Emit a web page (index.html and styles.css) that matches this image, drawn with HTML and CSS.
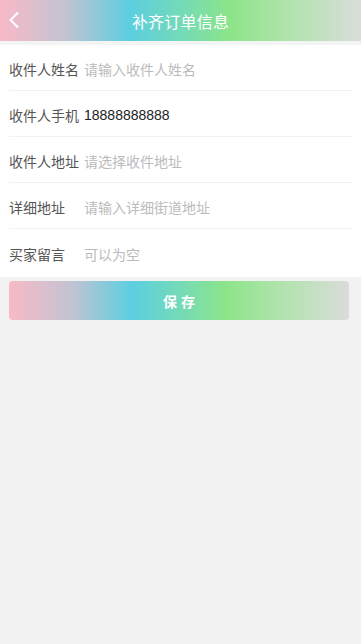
FILE: index.html
```html
<!DOCTYPE html>
<html lang="zh">
<head>
<meta charset="utf-8">
<title>补齐订单信息</title>
<link rel="stylesheet" href="styles.css">
</head>
<body>
<header class="topbar">
  <span class="back">
    <svg width="12" height="18" viewBox="0 0 12 18"><path d="M10 1.5 L2.5 9 L10 16.5" fill="none" stroke="#fff" stroke-width="2"/></svg>
  </span>
  <h1 class="title">补齐订单信息</h1>
</header>
<div class="gap"></div>
<main class="form">
  <div class="row"><span class="label">收件人姓名</span><span class="value placeholder">请输入收件人姓名</span></div>
  <div class="row"><span class="label">收件人手机</span><span class="value">18888888888</span></div>
  <div class="row"><span class="label">收件人地址</span><span class="value placeholder">请选择收件地址</span></div>
  <div class="row"><span class="label">详细地址</span><span class="value placeholder">请输入详细街道地址</span></div>
  <div class="row last"><span class="label">买家留言</span><span class="value placeholder">可以为空</span></div>
</main>
<button class="save">保 存</button>
</body>
</html>
```
FILE: styles.css
```css
html, body {
  margin: 0;
  padding: 0;
  background: #f2f2f2;
  font-family: "Liberation Sans", "Noto Sans CJK SC", sans-serif;
}
.topbar {
  height: 41px;
  display: flex;
  align-items: center;
  justify-content: center;
  position: relative;
  background: linear-gradient(90deg, #f8b9c7 0%, #c4c3d2 18%, #5ccfe0 36%, #74dab8 50%, #8de589 64%, #b5e3b2 82%, #dadcd9 100%);
}
.back {
  position: absolute;
  left: 8px;
  top: 11px;
  display: flex;
}
.title {
  margin: 0;
  font-size: 16px;
  font-weight: normal;
  color: #fff;
  letter-spacing: 0.2px;
}
.gap {
  height: 4px;
  background: #f3f4f4;
}
.form {
  background: #fff;
  padding: 0 9px;
  display: flex;
  flex-direction: column;
}
.row {
  box-sizing: border-box;
  height: 46px;
  padding-top: 2px;
  display: flex;
  align-items: center;
  border-bottom: 1px solid #f2f2f2;
  font-size: 14px;
}
.row.last {
  border-bottom: none;
  height: 48px;
}
.label {
  width: 75px;
  flex: none;
  color: #555;
}
.value {
  color: #222;
}
.placeholder {
  color: #bbb;
}
.save {
  display: block;
  margin: 4px 12px 0 9px;
  width: calc(100% - 21px);
  height: 39px;
  border: none;
  border-radius: 4px;
  background: linear-gradient(90deg, #f8b9c7 0%, #c4c3d2 18%, #5ccfe0 36%, #74dab8 50%, #8de589 64%, #b5e3b2 82%, #dadcd9 100%);
  color: #fff;
  font-size: 14px;
  font-weight: 600;
  font-family: "Liberation Sans", "Noto Sans CJK SC", sans-serif;
  letter-spacing: 0;
}
```
